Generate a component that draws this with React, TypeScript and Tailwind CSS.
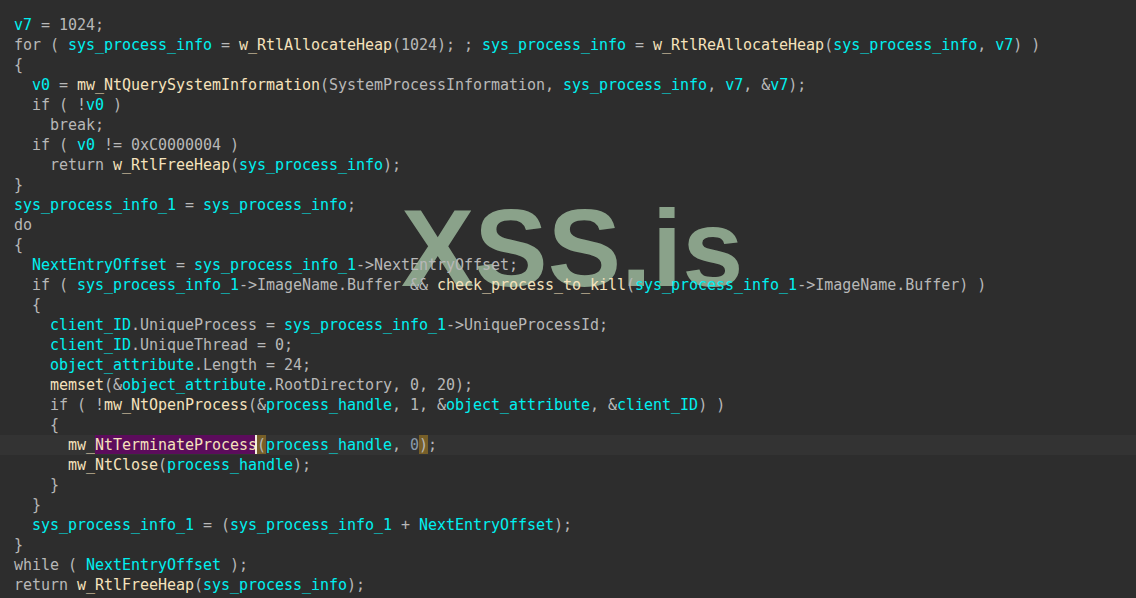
type Kind = "p" | "v" | "f";

const colors: Record<Kind, string> = {
  p: "text-[#b8b8b8]",
  v: "text-[#00f0f0]",
  f: "text-[#f5e2bc]",
};

type Seg = [string, Kind];

const lines: Seg[][] = [
  [["v7", "v"], [" = 1024;", "p"]],
  [["for ( ", "p"], ["sys_process_info", "v"], [" = ", "p"], ["w_RtlAllocateHeap", "f"], ["(1024); ; ", "p"], ["sys_process_info", "v"], [" = ", "p"], ["w_RtlReAllocateHeap", "f"], ["(", "p"], ["sys_process_info", "v"], [", ", "p"], ["v7", "v"], [") )", "p"]],
  [["{", "p"]],
  [["  ", "p"], ["v0", "v"], [" = ", "p"], ["mw_NtQuerySystemInformation", "f"], ["(SystemProcessInformation, ", "p"], ["sys_process_info", "v"], [", ", "p"], ["v7", "v"], [", &", "p"], ["v7", "v"], [");", "p"]],
  [["  if ( !", "p"], ["v0", "v"], [" )", "p"]],
  [["    break;", "p"]],
  [["  if ( ", "p"], ["v0", "v"], [" != 0xC0000004 )", "p"]],
  [["    return ", "p"], ["w_RtlFreeHeap", "f"], ["(", "p"], ["sys_process_info", "v"], [");", "p"]],
  [["}", "p"]],
  [["sys_process_info_1", "v"], [" = ", "p"], ["sys_process_info", "v"], [";", "p"]],
  [["do", "p"]],
  [["{", "p"]],
  [["  ", "p"], ["NextEntryOffset", "v"], [" = ", "p"], ["sys_process_info_1", "v"], ["->NextEntryOffset;", "p"]],
  [["  if ( ", "p"], ["sys_process_info_1", "v"], ["->ImageName.Buffer && ", "p"], ["check_process_to_kill", "f"], ["(", "p"], ["sys_process_info_1", "v"], ["->ImageName.Buffer) )", "p"]],
  [["  {", "p"]],
  [["    ", "p"], ["client_ID", "v"], [".UniqueProcess = ", "p"], ["sys_process_info_1", "v"], ["->UniqueProcessId;", "p"]],
  [["    ", "p"], ["client_ID", "v"], [".UniqueThread = 0;", "p"]],
  [["    ", "p"], ["object_attribute", "v"], [".Length = 24;", "p"]],
  [["    ", "p"], ["memset", "f"], ["(&", "p"], ["object_attribute", "v"], [".RootDirectory, 0, 20);", "p"]],
  [["    if ( !", "p"], ["mw_NtOpenProcess", "f"], ["(&", "p"], ["process_handle", "v"], [", 1, &", "p"], ["object_attribute", "v"], [", &", "p"], ["client_ID", "v"], [") )", "p"]],
  [["    {", "p"]],
  [],
  [["      ", "p"], ["mw_NtClose", "f"], ["(", "p"], ["process_handle", "v"], [");", "p"]],
  [["    }", "p"]],
  [["  }", "p"]],
  [["  ", "p"], ["sys_process_info_1", "v"], [" = (", "p"], ["sys_process_info_1", "v"], [" + ", "p"], ["NextEntryOffset", "v"], [");", "p"]],
  [["}", "p"]],
  [["while ( ", "p"], ["NextEntryOffset", "v"], [" );", "p"]],
  [["return ", "p"], ["w_RtlFreeHeap", "f"], ["(", "p"], ["sys_process_info", "v"], [");", "p"]],
];

function CodeLine({ segs }: { segs: Seg[] }) {
  return (
    <div className="h-5 pl-3.5 leading-5 whitespace-pre">
      {segs.map((s, i) => (
        <span key={i} className={colors[s[1]]}>
          {s[0]}
        </span>
      ))}
    </div>
  );
}

// current line, cursor sits on the open paren
function ActiveLine() {
  return (
    <div className="flex h-5 bg-[#333333] pl-3.5 leading-5 whitespace-pre">
      <span className="text-[#f5e2bc]">{"      mw_"}</span>
      <span className="h-[19px] bg-[#5c0c5c] text-[#f5e2bc]">NtTerminateProcess</span>
      <span className="ml-[-2px] h-[19px] border-l-2 border-[#f4f0e0] bg-[#775f28] text-[#b8b8b8]">(</span>
      <span className="text-[#00f0f0]">process_handle</span>
      <span className="text-[#b8b8b8]">, </span>
      <span className="text-[#8a9aaa]">0</span>
      <span className="h-[19px] bg-[#775f28] text-[#b8b8b8]">)</span>
      <span className="text-[#b8b8b8]">;</span>
    </div>
  );
}

export default function App() {
  return (
    <div className="relative h-[598px] w-[1136px] overflow-hidden bg-[#2d2d2d] pt-[15px] font-['DejaVu_Sans_Mono',monospace] text-[15px] tracking-[-0.03px]">
      {/* Watermark */}
      <div className="absolute left-[401px] top-[193px] font-['Liberation_Sans',sans-serif] text-[110px] font-bold leading-[110px] tracking-normal text-[#8aa28a]">
        XSS.is
      </div>

      <div className="relative">
        {lines.map((segs, i) => (i === 21 ? <ActiveLine key={i} /> : <CodeLine key={i} segs={segs} />))}
      </div>
    </div>
  );
}
